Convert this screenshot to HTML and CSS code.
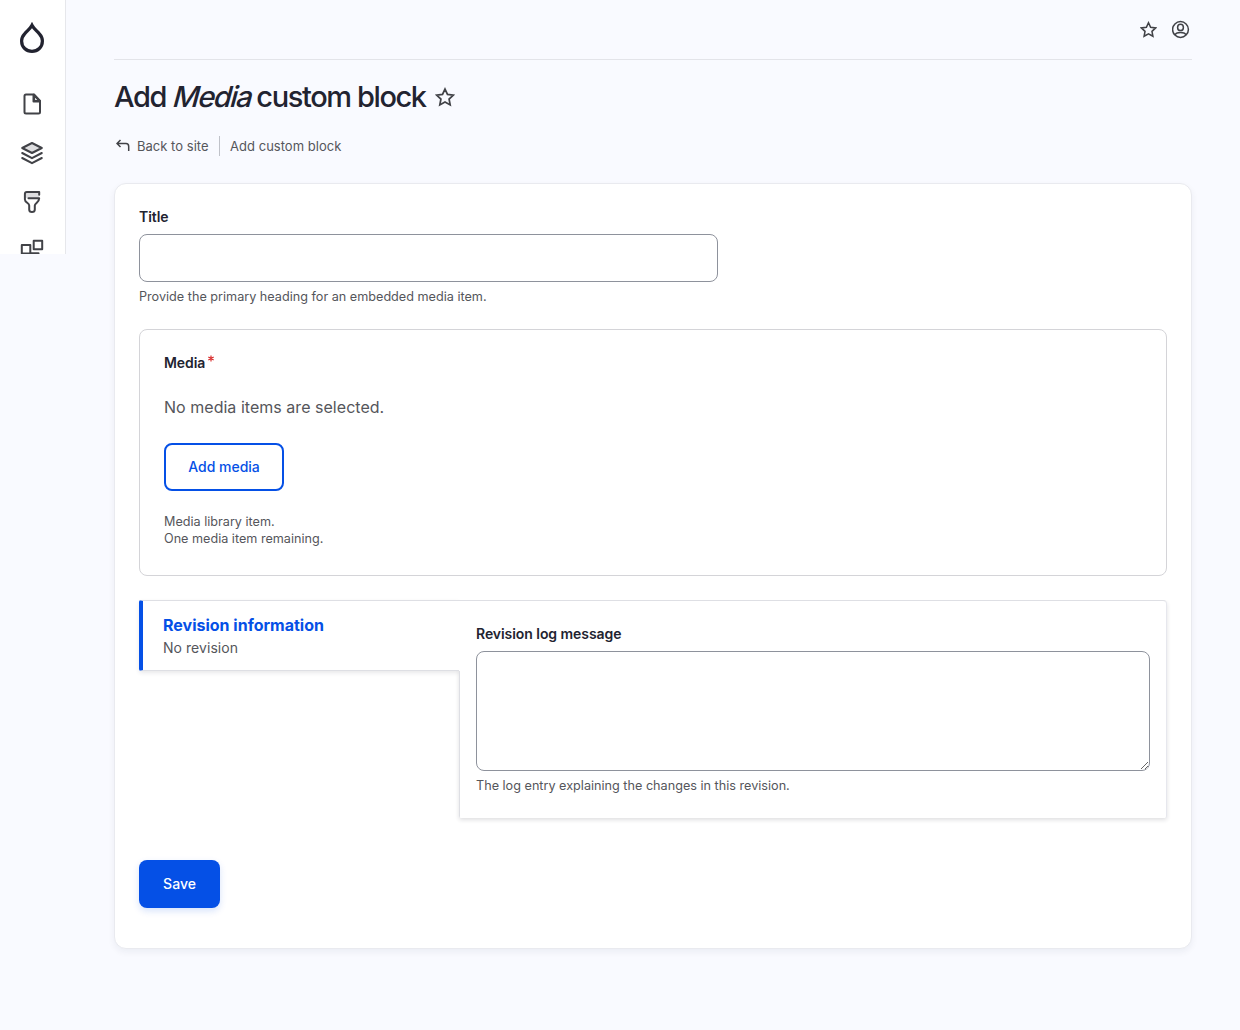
FILE: index.html
```html
<!DOCTYPE html>
<html lang="en">
<head>
<meta charset="utf-8">
<title>Add Media custom block</title>
<link rel="stylesheet" href="styles.css">
</head>
<body>
<div class="app">
  <nav class="sidebar">
    <svg class="logo" width="26" height="32" viewBox="0 0 26 32"><path d="M13 3.2C11.300 6.500 8.300 8.700 5.800 11.600C3.600 14 2.600 16.500 2.600 19C2.600 25.200 7.300 29.400 13 29.400S23.400 25.200 23.400 19C23.400 16.500 22.400 14 20.200 11.600C17.700 8.700 14.700 6.500 13 3.200Z"/></svg>
    <svg class="nav-icon" width="24" height="24" viewBox="0 0 24 24"><path d="M14 2.500v6.500h6z" fill="#dedee0"/><path d="M13.500 2.500H6Q4.500 2.500 4.500 4V20Q4.500 21.500 6 21.500H18.500Q20 21.500 20 20V9L13.500 2.500V9.500H20"/></svg>
    <svg class="nav-icon" width="24" height="24" viewBox="0 0 24 24"><path d="M12 2L21.800 7L12 12L2.200 7Z" fill="#dedee0"/><path d="M2.200 12L12 17.200L21.800 12M2.200 17L12 22.200L21.800 17"/></svg>
    <svg class="nav-icon" width="24" height="24" viewBox="0 0 24 24"><path d="M5 2H19V8H5Z" fill="#dedee0" stroke="none"/><path d="M19.200 4.800V2H6.800Q4.900 2 4.900 4V9.500C4.900 12.500 9.200 13 9.200 15.500V19.500Q9.200 22 12 22T14.800 19.500V15.500C14.800 13 19.200 12.500 19.200 8.200H8.500"/></svg>
    <svg class="nav-icon" width="24" height="24" viewBox="0 0 24 24"><path d="M13.700 1.800H22.200V10.200H13.700ZM1.800 6H10.300V14.500H1.800ZM10.500 14.200H18.500V22H10.500Z"/></svg>
  </nav>
  <main class="page">
    <header class="topbar">
      <svg width="17" height="17" viewBox="0 0 24 24"><path d="M12 2.500L15 8.900L22 9.800L16.900 14.600L18.200 21.500L12 18.100L5.800 21.500L7.100 14.600L2 9.800L9 8.900Z"/></svg>
      <svg width="18" height="19" viewBox="0 0 18 19"><circle cx="8.500" cy="9.500" r="7.900"/><ellipse cx="8.500" cy="7.400" rx="2.900" ry="3.200"/><path d="M3.300 15C3.500 13.100 5.100 12.500 8.500 12.500S13.500 13.100 13.700 15"/></svg>
    </header>
    <div class="heading">
      <h1>Add <em>Media</em> custom block</h1>
      <svg width="20" height="20" viewBox="0 0 24 24"><path d="M12 2.500L15 8.900L22 9.800L16.900 14.600L18.200 21.500L12 18.100L5.800 21.500L7.100 14.600L2 9.800L9 8.900Z"/></svg>
    </div>
    <div class="breadcrumb">
      <a class="back"><svg width="14" height="14" viewBox="0 0 14 14"><path d="M4.500 1L1 4.500L4.500 8M1 4.500H10Q12.700 4.500 12.700 7.500V12"/></svg><span>Back to site</span></a>
      <a>Add custom block</a>
    </div>
    <form class="card">
      <label class="label" for="title">Title</label>
      <input class="input" id="title" type="text">
      <p class="help">Provide the primary heading for an embedded media item.</p>
      <section class="media">
        <div class="label media-label"><span>Media</span><svg class="required" width="6" height="7" viewBox="0 0 7 7"><path d="M3.500 0V7M.4 1.800L6.600 5.200M6.600 1.800L.4 5.200"/></svg></div>
        <p class="empty">No media items are selected.</p>
        <button class="button outline" type="button">Add media</button>
        <p class="note">Media library item.<br>One media item remaining.</p>
      </section>
      <section class="tabs">
        <div class="tab"><strong>Revision information</strong><span>No revision</span></div>
        <div class="pane">
          <label class="label" for="log">Revision log message</label>
          <textarea class="textarea" id="log"></textarea>
          <p class="help">The log entry explaining the changes in this revision.</p>
        </div>
      </section>
      <button class="button primary" type="button">Save</button>
    </form>
  </main>
</div>
</body>
</html>
```
FILE: styles.css
```css
* { box-sizing: border-box; }
body { margin: 0; background: #f9faff; color: #55565b; font-family: Inter, "Liberation Sans", sans-serif; }
h1, p { margin: 0; }
svg { display: block; fill: none; stroke: #414247; stroke-width: 1.500; flex: none; }
.app { display: flex; align-items: flex-start; min-height: 1030px; }
.sidebar { width: 66px; height: 254px; overflow: hidden; background: #fff; border-right: 1px solid #e6e7eb; display: flex; flex-direction: column; align-items: center; padding: 22px 2px 0 1px; gap: 25px; }
.logo { stroke: #222330; stroke-width: 3.200; margin-bottom: 13px; }
.nav-icon { stroke-width: 2; stroke-linecap: round; stroke-linejoin: round; }
.page { flex: 1; padding: 0 48px; }
.topbar { height: 60px; border-bottom: 1px solid #e3e4e9; display: flex; justify-content: flex-end; align-items: center; gap: 15px; padding: 0 2px 0 0; }
.topbar svg:first-child { stroke-width: 2.200; }
.heading { display: flex; align-items: center; gap: 9px; height: 44px; margin-top: 15px; }
h1 { font-size: 29px; line-height: 40px; font-weight: 500; letter-spacing: -1.400px; color: #222330; padding-bottom: 1px; }
h1 em { display: inline-block; font-style: normal; transform: skewX(-15deg); letter-spacing: -1.400px; margin: 0 -2.500px 0 2px; }
.heading svg { stroke-width: 2.100; }
.breadcrumb { display: flex; align-items: center; height: 20px; margin: 17px 0 27px; font-size: 13px; letter-spacing: .02px; }
.breadcrumb a + a { padding-left: 10.500px; }
.back { display: flex; align-items: center; height: 20px; gap: 7px; padding: 0 10px 0 2px; border-right: 1px solid #c0c2c9; }
.card { height: 766px; padding: 24px; background: #fff; border: 1px solid #e9eaef; border-radius: 12px; box-shadow: 0 3px 7px rgba(25,35,70,.06); }
.label { display: block; font-size: 14px; line-height: 18px; font-weight: 600; letter-spacing: -.06px; color: #222330; }
.input, .textarea { display: block; border: 1px solid #8e929c; border-radius: 8px; background: #fff; }
.input { width: 579px; height: 48px; margin-top: 8px; }
.help { font-size: 12.650px; line-height: 17px; margin-top: 6px; }
.media { height: 247px; margin-top: 24px; padding: 24px; border: 1px solid #d4d4d8; border-radius: 8px; }
.media-label { display: flex; gap: 3px; }
.required { stroke: #d72222; stroke-width: 1.300; margin-top: 1px; }
.empty { font-size: 16px; line-height: 24px; margin-top: 23px; letter-spacing: .03px; }
.button { display: flex; align-items: center; justify-content: center; height: 48px; border-radius: 8px; font: 500 14px Inter, sans-serif; padding: 0 0 2px; }
.outline { width: 120px; margin-top: 24px; border: 2px solid #0550e6; background: #fff; color: #0550e6; }
.note { font-size: 12.640px; line-height: 17px; margin-top: 22px; }
.tabs { display: flex; align-items: flex-start; height: 218px; margin-top: 24px; }
.tab { width: 320px; height: 71px; padding: 12px 20px; border: 1px solid #dedfe4; border-left: 4px solid #0550e6; border-right: 0; border-radius: 2px 0 0 2px; box-shadow: 0 2px 4px rgba(25,25,45,.1); display: flex; flex-direction: column; }
.tab strong { font-size: 16px; line-height: 24px; font-weight: 700; color: #0550e6; }
.tab span { font-size: 14px; line-height: 21px; letter-spacing: .05px; }
.pane { flex: 1; height: 218px; padding: 24px 16px 0; border-top: 1px solid #dedfe4; background: linear-gradient(#dedfe4, #dedfe4) 0 70px / 1px 100% no-repeat #fff; border-right: 1px solid #e6e7ed; border-radius: 0 4px 2px 2px; box-shadow: 0 2px 4px rgba(25,25,45,.14); clip-path: polygon(0 0, 110% 0, 110% 110%, -8px 110%, -8px 71px, 0 71px); }
.pane .label { margin-left: 1px; }
.textarea { width: calc(100% - 1px); height: 120px; margin: 8px 0 0 1px; resize: vertical; }
.pane .help { margin-left: 1px; }
.primary { width: 81px; margin-top: 42px; border: 0; color: #fff; background: #0550e6; box-shadow: 0 3px 7px rgba(5,80,230,.16); }
```
